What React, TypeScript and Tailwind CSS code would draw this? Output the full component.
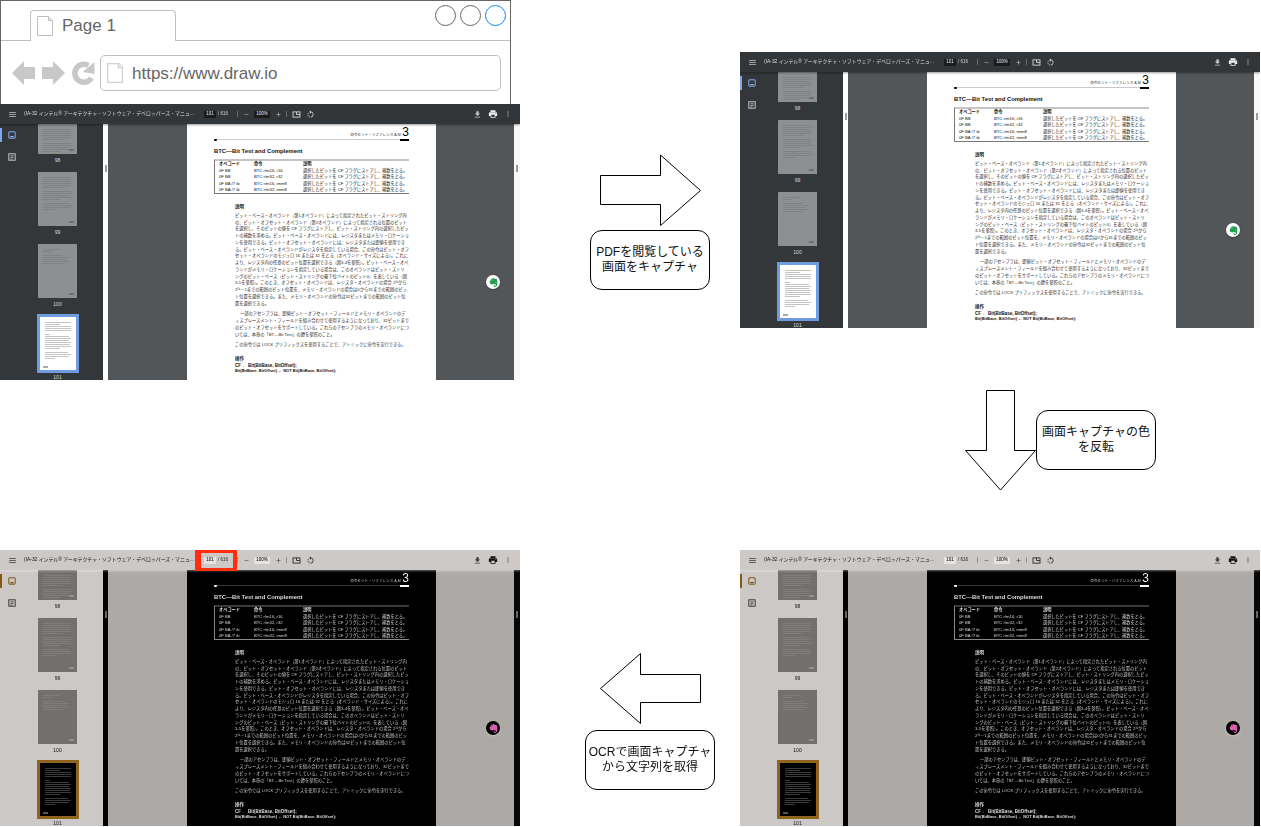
import { SiEvernote } from 'react-icons/si'

const jp = 'font-["Liberation_Sans","Noto_Sans_CJK_JP",sans-serif]'

const rows = [
  ['0F BB', 'BTC r/m16, r16', '選択したビットを CF フラグにストアし、補数をとる。'],
  ['0F BB', 'BTC r/m32, r32', '選択したビットを CF フラグにストアし、補数をとる。'],
  ['0F BA /7 ib', 'BTC r/m16, imm8', '選択したビットを CF フラグにストアし、補数をとる。'],
  ['0F BA /7 ib', 'BTC r/m32, imm8', '選択したビットを CF フラグにストアし、補数をとる。'],
]

const para1 =
  'ビット・ベース・オペランド（第1オペランド）によって指定されたビット・ストリング内の、ビット・オフセット・オペランド（第2オペランド）によって指定される位置のビットを選択し、そのビットの値を CF フラグにストアし、ビット・ストリング内の選択したビットの補数を求める。ビット・ベース・オペランドには、レジスタまたはメモリ・ロケーションを使用できる。ビット・オフセット・オペランドには、レジスタまたは即値を使用できる。ビット・ベース・オペランドがレジスタを指定している場合、この命令はビット・オフセット・オペランドのモジュロ 16 または 32 をとる（オペランド・サイズによる）。これにより、レジスタ内の任意のビット位置を選択できる（図3-4を参照）。ビット・ベース・オペランドがメモリ・ロケーションを指定している場合は、このオペランドはビット・ストリングのビット・ベース（ビット・ストリングの最下位バイトのビット0）を表している（図3-5を参照）。このとき、オフセット・オペランドは、レジスタ・オペランドの場合 2³¹から 2³¹－1までの範囲のビット位置を、メモリ・オペランドの場合は0から31までの範囲のビット位置を選択できる。また、メモリ・オペランドの命令は32ビットまでの範囲のビット位置を選択できる。'
const para2 =
  '一部のアセンブラは、即値ビット・オフセット・フィールドとメモリ・オペランドのディスプレースメント・フィールドを組み合わせて使用するようになっており、32ビットまでのビット・オフセットをサポートしている。これらのアセンブラのメモリ・オペランドについては、本章の「BT—Bit Test」の節を参照のこと。'
const para3 = 'この命令では LOCK プリフィックスを使用することで、アトミックに命令を実行できる。'

function Ic({ d, size = 8, className = '' }: { d: string; size?: number; className?: string }) {
  return (
    <svg viewBox="0 0 24 24" width={size} height={size} className={className} fill="currentColor">
      <path d={d} />
    </svg>
  )
}

function Toolbar() {
  return (
    <div className="relative z-10 flex h-[20px] items-center bg-[#323639] text-[#d8dadb] shadow-[0_1px_2px_rgba(0,0,0,0.4)]">
      <Ic d="M3 18h18v-2H3v2zm0-5h18v-2H3v2zm0-7v2h18V6H3z" size={9} className="ml-[8px] text-[#c4c6c7]" />
      <span className={`ml-[7px] w-[173px] overflow-hidden whitespace-nowrap text-[4.9px] text-[#dcdedf] ${jp}`}>
        (IA-32 インテル® アーキテクチャ・ソフトウェア・デベロッパーズ・マニュ...
      </span>
      <span className={`ml-[7px] flex h-[7px] w-[12px] items-center justify-center bg-[#191b1c] text-[4.5px] text-[#e8e8e8] ${jp}`}>101</span>
      <span className={`ml-[2px] w-[13px] whitespace-nowrap text-[4.5px] text-[#d0d2d3] ${jp}`}>/ 616</span>
      <span className="ml-[6px] h-[6px] w-px bg-[#6a6d70]" />
      <Ic d="M19 13H5v-2h14v2z" size={7} className="ml-[5px] text-[#a9abac]" />
      <span className={`ml-[4px] flex h-[7px] w-[16px] items-center justify-center bg-[#191b1c] text-[4.5px] text-[#e8e8e8] ${jp}`}>100%</span>
      <Ic d="M19 13h-6v6h-2v-6H5v-2h6V5h2v6h6v2z" size={7} className="ml-[5px] text-[#c4c6c7]" />
      <span className="ml-[4px] h-[6px] w-px bg-[#6a6d70]" />
      <svg viewBox="0 0 10 8" width="9" height="7" className="ml-[5px] text-[#d8dadb]" fill="none" stroke="currentColor">
        <rect x="1" y="1" width="8" height="6" />
        <path d="M5 1v3h4" />
      </svg>
      <Ic
        d="M7.11 8.53L5.7 7.11C4.8 8.27 4.24 9.61 4.07 11h2.02c.14-.87.49-1.72 1.02-2.47zM6.09 13H4.07c.17 1.39.72 2.73 1.62 3.89l1.41-1.42c-.52-.75-.87-1.59-1.01-2.47zm1.01 5.32c1.16.9 2.51 1.44 3.9 1.61V17.9c-.87-.15-1.71-.49-2.46-1.03L7.1 18.32zM13 4.07V1L8.45 5.55 13 10V6.09c2.84.48 5 2.94 5 5.91s-2.16 5.43-5 5.91v2.02c3.95-.49 7-3.85 7-7.93s-3.05-7.44-7-7.93z"
        size={9}
        className="ml-[5px]"
      />
      <div className="ml-auto mr-[8px] flex items-center gap-[6px]">
        <Ic d="M19 9h-4V3H9v6H5l7 7 7-7zM5 18v2h14v-2H5z" size={9} className="text-[#c4c6c7]" />
        <Ic
          d="M19 8H5c-1.66 0-3 1.34-3 3v6h4v4h12v-4h4v-6c0-1.66-1.34-3-3-3zm-3 11H8v-5h8v5zm3-7c-.55 0-1-.45-1-1s.45-1 1-1 1 .45 1 1-.45 1-1 1zm-1-9H6v4h12V3z"
          size={10}
          className="text-[#eceded]"
        />
        <Ic
          d="M12 8c1.1 0 2-.9 2-2s-.9-2-2-2-2 .9-2 2 .9 2 2 2zm0 2c-1.1 0-2 .9-2 2s.9 2 2 2 2-.9 2-2-.9-2-2-2zm0 6c-1.1 0-2 .9-2 2s.9 2 2 2 2-.9 2-2-.9-2-2-2z"
          size={8}
          className="text-[#a9abac]"
        />
      </div>
    </div>
  )
}

function ThumbLines({ lines, color }: { lines: number[]; color: string }) {
  return (
    <div className="flex flex-col gap-[1px] px-[5px] pt-[5px]">
      {lines.map((w, i) => (
        <div key={i} className={`h-px ${color}`} style={{ width: `${w}%` }} />
      ))}
    </div>
  )
}

const dense = [96, 100, 92, 100, 98, 70, 0, 96, 100, 94, 100, 60, 0, 90, 100, 96, 40]
const sparse = [60, 30, 0, 70, 90, 80, 90, 70]
const current = [100, 60, 100, 100, 100, 0, 20, 96, 100, 94, 100, 98, 100, 60, 0, 90, 100, 96, 40]

function Thumb({ clip, label, lines }: { clip?: boolean; label: string; lines: number[] }) {
  return (
    <>
      <div className={`relative w-[39px] overflow-hidden bg-[#8d9090] ${clip ? 'h-[30px]' : 'h-[54px]'}`}>
        <ThumbLines lines={lines} color="bg-[#808384]" />
        <div className="absolute bottom-[3px] right-[3px] h-[2px] w-[5px] bg-[#6d7071]" />
      </div>
      <div className={`flex h-[18px] w-full items-start justify-center pt-[3px] text-[5px] leading-[6px] text-[#dcdedf] ${jp}`}>{label}</div>
    </>
  )
}

function Sidebar() {
  return (
    <div className="relative flex w-[103px] shrink-0 bg-[#33373a]">
      <div className="relative w-[19px] shrink-0">
        <div className="absolute left-0 top-[4px] h-[14px] w-[1.5px] bg-[#7aa7ee]" />
        <svg viewBox="0 0 10 10" width="8" height="8" className="absolute left-[8px] top-[7px] text-[#8ab4f8]" fill="none" stroke="currentColor" strokeWidth="1.2">
          <rect x="1" y="1" width="8" height="8" rx="0.5" />
          <path d="M3 7h4" strokeWidth="1.6" />
        </svg>
        <svg viewBox="0 0 10 10" width="8" height="8" className="absolute left-[8px] top-[29px] text-[#c8cacb]" fill="none" stroke="currentColor" strokeWidth="1.2">
          <rect x="1" y="1" width="8" height="8" />
          <path d="M3 3.5h4M3 5.5h4M3 7.5h2.5" strokeWidth="1" />
        </svg>
      </div>
      <div className="ml-[19px] flex w-[39px] flex-col items-center">
        <Thumb clip label="98" lines={dense} />
        <Thumb label="99" lines={dense} />
        <Thumb label="100" lines={sparse} />
        <div className="relative mt-[-2px] h-[59px] w-[42px] shrink-0 border-[3px] border-[#6f9be0] bg-white">
          <ThumbLines lines={current} color="bg-[#c4c4c4]" />
          <div className="absolute bottom-[2px] left-[3px] h-[2px] w-[5px] bg-[#aaa]" />
        </div>
        <div className={`pt-[1px] text-[5px] leading-[6px] text-[#dcdedf] ${jp}`}>101</div>
      </div>
    </div>
  )
}

function Page() {
  return (
    <div className={`ml-[79px] h-full w-[249px] shrink-0 overflow-hidden bg-white px-[27px] text-black ${jp}`}>
      <div className="relative flex h-[16px] items-end justify-end border-b-[1.5px] border-[#c9c9c9]">
        <span className="mb-[1.5px] mr-[1.5px] text-[3.6px] leading-[5px] text-[#333]">命令セット・リファレンス A-M</span>
        <span className="text-[12px] leading-[13px]">3</span>
        <div className="absolute bottom-[-1.5px] right-0 h-[1.5px] w-[9px] bg-black" />
        <div className="absolute bottom-[-2px] left-0 h-[2.5px] w-[2.5px] rounded-full bg-black" />
      </div>
      <h1 className="mt-[7px] text-[5.9px] font-bold leading-[8px] text-[#111]">BTC—Bit Test and Complement</h1>
      <div className="mt-[4px] h-[35px] rounded-bl-[1px] border-b border-l border-t-2 border-[#777] border-t-[#c4c4c4] pl-[4px] text-[4.2px] leading-[6.5px] text-[#111]">
        <div className="grid grid-cols-[35px_49px_1fr] whitespace-nowrap font-bold">
          <span>オペコード</span>
          <span>命令</span>
          <span>説明</span>
        </div>
        {rows.map((r, i) => (
          <div key={i} className="grid grid-cols-[35px_49px_1fr] whitespace-nowrap">
            <span>{r[0]}</span>
            <span>{r[1]}</span>
            <span>{r[2]}</span>
          </div>
        ))}
      </div>
      <div className="ml-[21px] text-[4.25px] leading-[6.75px] text-[#2a2a2a]">
        <h2 className="mt-[10px] text-[4.5px] font-bold text-[#111]">説明</h2>
        <p className="mt-[2px] h-[94.5px] overflow-hidden">{para1}</p>
        <p className="mt-[4px] indent-[5px]">{para2}</p>
        <p className="mt-[4px] indent-[0px]">{para3}</p>
      </div>
      <div className="ml-[21px] text-[4.5px] font-bold leading-[5.5px] text-[#111]">
        <h2 className="mt-[7px]">操作</h2>
        <p className="mt-[1px]">CF ← Bit(BitBase, BitOffset);</p>
        <p className="text-[4px]">Bit(BitBase, BitOffset) ← NOT Bit(BitBase, BitOffset);</p>
      </div>
    </div>
  )
}

function Viewer({ inverted, className }: { inverted?: boolean; className: string }) {
  return (
    <div className={`absolute flex h-[276px] w-[520px] flex-col overflow-hidden blur-[0.3px] ${inverted ? 'invert' : ''} ${className}`}>
      <Toolbar />
      <div className="flex min-h-0 flex-1">
        <Sidebar />
        <div className="relative w-[5px] shrink-0 bg-white">
          <div className="absolute left-[1.5px] top-[41px] h-[7px] w-[2px] bg-[#9a9a9a]" />
        </div>
        <div className="relative flex flex-1 bg-[#525659]">
          <Page />
          <div className="absolute left-[378px] top-[151px] flex h-[14px] w-[14px] items-center justify-center rounded-full bg-white shadow-[0_1px_2px_rgba(0,0,0,0.3)]">
            <SiEvernote className="h-[9px] w-[9px] text-[#1f9d4d]" />
          </div>
        </div>
        <div className="relative w-[6px] shrink-0 bg-[#f8f8f8]">
          <div className="absolute left-[2px] top-[41px] h-[7px] w-[2px] bg-[#9a9a9a]" />
        </div>
      </div>
    </div>
  )
}

function FileIcon({ className, thick }: { className: string; thick?: boolean }) {
  return (
    <svg viewBox="0 0 16 20" width="16" height="20" className={className} fill="#fff" stroke={thick ? '#d0d0d0' : '#c0c0c0'} strokeWidth={thick ? 1.6 : 1}>
      <path d="M0.5 0.5H11.5L15.5 4.5V19.5H0.5Z" />
      <path d="M11.5 0.5V4.5H15.5" fill={thick ? '#fff' : '#e4e4e4'} />
    </svg>
  )
}

function BrowserFrame() {
  return (
    <div className={`absolute left-0 top-0 h-[105px] w-[511px] border-x border-t border-[#666] ${jp}`}>
      <div className="h-[40px] border-b border-[#c0c0c0] pl-[29px] pt-[9px]">
        <div className="flex h-[31px] w-[146px] items-center rounded-t-[4px] border border-b-0 border-[#c0c0c0] bg-white pl-[6px]">
          <FileIcon className="shrink-0" />
          <span className="ml-[9px] text-[17px] text-[#666]">Page 1</span>
        </div>
      </div>
      <div className="absolute right-[4px] top-[4px] flex gap-[4px]">
        <span className="h-[21px] w-[21px] rounded-full border border-[#666]" />
        <span className="h-[21px] w-[21px] rounded-full border border-[#666]" />
        <span className="h-[21px] w-[21px] rounded-full border border-[#0a84ff]" />
      </div>
      <div className="flex items-center pl-[10px] pt-[14px]">
        <svg width="84" height="26" viewBox="10 61 84 26" className="shrink-0" fill="#c8c8c8">
          <path d="M11 74L23 62V68H34V80H23V86Z" />
          <path d="M64 74L52 62V68H41V80H52V86Z" />
          <path d="M90.5 79A9 9 0 1 1 87.5 66.5" fill="none" stroke="#c8c8c8" strokeWidth="5.5" />
          <path d="M93.5 63V75L81.5 73Z" />
        </svg>
        <div className="ml-[5px] flex h-[36px] w-[401px] items-center rounded-[5px] border border-[#c0c0c0] pl-[6px]">
          <FileIcon className="shrink-0" thick />
          <span className="ml-[9px] pt-[2px] text-[17px] text-[#666]">https://www.draw.io</span>
        </div>
      </div>
    </div>
  )
}

function Callout({ className, children }: { className: string; children: React.ReactNode }) {
  return (
    <div className={`absolute flex h-[60px] w-[120px] flex-col items-center justify-center rounded-[12px] border border-black bg-white text-center text-[12px] leading-[15px] text-[#111] ${jp} ${className}`}>
      {children}
    </div>
  )
}

function Arrows() {
  return (
    <svg width="1261" height="827" className="absolute left-0 top-0" fill="#fff" stroke="#000">
      <path d="M600.5 175.5H660.5V155L700.5 190.5L660.5 225.5V204.5H600.5Z" />
      <path d="M986.5 390.5H1014.5V450.5H1035.5L1000.5 490L965.5 450.5H986.5Z" />
      <path d="M700.5 674.5H640.5V653.5L600.5 688.5L640.5 723.5V702.5H700.5Z" />
    </svg>
  )
}

export default function App() {
  return (
    <div className="relative h-[827px] w-[1261px] overflow-hidden bg-white">
      <BrowserFrame />
      <Viewer className="left-0 top-[104px]" />
      <Viewer className="left-[740px] top-[52px]" />
      <Viewer inverted className="left-0 top-[550px]" />
      <Viewer inverted className="left-[740px] top-[550px]" />
      <div className="absolute left-[195px] top-[550px] h-[21px] w-[42px] border-y-[3px] border-l-[6px] border-r-[4px] border-[#ff2d0a]" />
      <Arrows />
      <Callout className="left-[590px] top-[230px]">
        <span>PDFを閲覧している</span>
        <span>画面をキャプチャ</span>
      </Callout>
      <Callout className="left-[1036px] top-[410px]">
        <span>画面キャプチャの色</span>
        <span>を反転</span>
      </Callout>
      <Callout className="left-[585px] top-[730px] !w-[130px]">
        <span>OCRで画面キャプチャ</span>
        <span>から文字列を取得</span>
      </Callout>
    </div>
  )
}
